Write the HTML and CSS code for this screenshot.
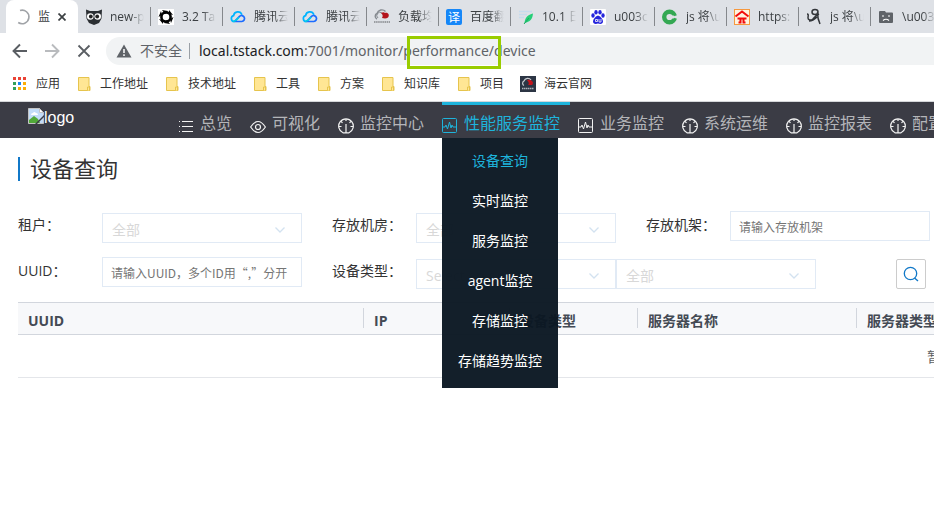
FILE: index.html
```html
<!DOCTYPE html>
<html lang="zh-CN">
<head>
<meta charset="utf-8">
<title>设备查询</title>
<link rel="stylesheet" href="styles.css">
</head>
<body>
<svg width="0" height="0" class="defs" aria-hidden="true">
  <symbol id="cloud" viewBox="0 0 16 16"><path d="M4.500 12.500h-.3a3 3 0 0 1-.6-5.900A4.300 4.300 0 0 1 11.900 5.700" fill="none" stroke="#00b4ff" stroke-width="1.700"/><path d="M4.500 12.500h7.300a3 3 0 1 0-2.300-5.200z" fill="none" stroke="#1c6cff" stroke-width="1.700" stroke-linejoin="round"/><path d="M3 12.300c2 .4 3.500-1 6-4" fill="none" stroke="#00cfe8" stroke-width="1.700"/></symbol>
  <symbol id="folder" viewBox="0 0 16 16"><path d="M2.500 1.500h10.500v9h1v4H2.500z" fill="#ffe694" stroke="#e6c44d"/><path d="M11.500 14.500v-3.500h2v3.500" fill="#ffe694" stroke="#e6c44d"/></symbol>
  <symbol id="gauge" viewBox="0 0 16 16"><path d="M5 14.800a7.300 7.300 0 1 1 6 0z" fill="none" stroke="currentColor" stroke-width="1.200"/><path d="M8 6v9M1 8.500h2.500M12.500 8.500H15M3 3.300l1.500 1.500M13 3.300l-1.500 1.500M8 1v2" stroke="currentColor" stroke-width="1.200" fill="none"/></symbol>
  <symbol id="pulse" viewBox="0 0 16 16"><rect x=".5" y=".5" width="14" height="14" rx="1" fill="none" stroke="currentColor"/><path d="M1 9h2l1-2 1.500 4L7.500 4l1.500 6 1-3 1 2h3" fill="none" stroke="currentColor"/></symbol>
  <symbol id="chevron" viewBox="0 0 12 12"><path d="M1.500 3.500 6 8l4.500-4.500" fill="none" stroke="currentColor" stroke-width="1.300"/></symbol>
</svg>

<header class="browser">
  <div class="tabs">
    <div class="tab tab-active">
      <svg class="ico" viewBox="0 0 16 16"><path d="M6 1.500a6.800 6.800 0 1 1-1.800 12" fill="none" stroke="#a0a3a7" stroke-width="1.600"/></svg>
      <span class="tab-text">监</span>
      <button class="tab-close" aria-label="关闭"><svg viewBox="0 0 8 8" width="8" height="8"><path d="M.5.500l7 7M7.500.500l-7 7" stroke="#3c4043" stroke-width="1.700"/></svg></button>
    </div>
    <div class="tab">
      <svg class="ico" viewBox="0 0 16 16"><path d="M0 0.500l4 1.500h8l4-1.500-.5 9L13 14l-5 2-5-2L.5 9.500z" fill="#2b2f33"/><circle cx="4.300" cy="7.500" r="3.300" fill="#fff"/><circle cx="11.700" cy="7.500" r="3.300" fill="#fff"/><circle cx="4.800" cy="7.500" r="1.900" fill="#222"/><circle cx="11.200" cy="7.500" r="1.900" fill="#222"/></svg>
      <span class="tab-text">new-p</span>
    </div>
    <div class="tab">
      <svg class="ico" viewBox="0 0 16 16"><path d="M0 0h16v16H0z" fill="#fff"/><circle cx="8" cy="8" r="4.600" fill="none" stroke="#000" stroke-width="2.600"/><path d="M4 1l6 1-3 3zM11 1l4 5-4-1zM15.500 8l-2.500 6-1-4zM12 15l-6-1 3-3zM5 15l-4-5 4 1zM.500 8L3 2l1 4z" fill="#000"/></svg>
      <span class="tab-text">3.2 Ta</span>
    </div>
    <div class="tab"><svg class="ico"><use href="#cloud"/></svg><span class="tab-text">腾讯云</span></div>
    <div class="tab"><svg class="ico"><use href="#cloud"/></svg><span class="tab-text">腾讯云</span></div>
    <div class="tab">
      <svg class="ico" viewBox="0 0 16 16"><path d="M3 10a3 3 0 0 1 0-5.500 5 5 0 0 1 8.500-2" fill="none" stroke="#858a90" stroke-width="1.400"/><path d="M4 9a3 3 0 0 1 4-5" fill="none" stroke="#858a90"/><path d="M7 4c2-1 3-1 4 0 3-1 5 2 3 4.500-2 1.500-4 1-6 .5 1-2 1-3-1-5z" fill="#b3131b"/><path d="M0 13h16" stroke="#9a9da1" stroke-width="2" stroke-dasharray="1.500 .6"/></svg>
      <span class="tab-text">负载均</span>
    </div>
    <div class="tab">
      <svg class="ico" viewBox="0 0 16 16"><rect width="16" height="16" rx="2" fill="#1687f8"/><text x="2" y="12.500" class="glyph">译</text></svg>
      <span class="tab-text">百度翻</span>
    </div>
    <div class="tab">
      <svg class="ico" viewBox="0 0 16 16"><path d="M1 2.500h13M1 5.500h8M1 8.500h5" stroke="#c5dced" stroke-width="1.500"/><path d="M15 4.500c-5 1-8 4-8.500 9.500C12 13 14.500 10 15 4.500z" fill="#25cf78"/><path d="M6 15l5-6" stroke="#1ca860"/></svg>
      <span class="tab-text">10.1 日</span>
    </div>
    <div class="tab">
      <svg class="ico" viewBox="0 0 16 16"><rect width="16" height="16" rx="1" fill="#fff"/><g fill="#2525dc"><ellipse cx="3" cy="6.500" rx="1.700" ry="2.200"/><ellipse cx="6" cy="3.300" rx="1.700" ry="2.200"/><ellipse cx="10" cy="3.300" rx="1.700" ry="2.200"/><ellipse cx="13" cy="6.500" rx="1.700" ry="2.200"/><path d="M8 6.500c3 1 5 4 5 6s-2 3-5 2c-3 1-5 0-5-2s2-5 5-6z"/></g><path d="M5.500 10.500h2v2h-2zM9 10v3h2v-3" fill="none" stroke="#fff" stroke-width=".8"/></svg>
      <span class="tab-text">u003c</span>
    </div>
    <div class="tab">
      <svg class="ico" viewBox="0 0 16 16"><circle cx="7.500" cy="8" r="5.300" fill="none" stroke="#34a853" stroke-width="4.400"/><path d="M9 6.500h7v3H9z" fill="#dee1e6"/><path d="M10 3.500l3.500 3M10 12.500l3.500-3" stroke="#34a853" stroke-width="2"/></svg>
      <span class="tab-text">js 将\u</span>
    </div>
    <div class="tab">
      <svg class="ico" viewBox="0 0 16 16"><rect x=".5" y=".5" width="15" height="15" fill="#fff4df" stroke="#f6983e"/><path d="M1.500 7.500L8 2.500l6.500 5M3.500 9.500h9M6.500 9.500v4H4.500M9.500 9.500v4h2" fill="none" stroke="#f20d0d" stroke-width="2"/></svg>
      <span class="tab-text">https:</span>
    </div>
    <div class="tab">
      <svg class="ico" viewBox="0 0 16 16"><path d="M1 5c2 0 1 2 1 4s3 3 5 1 2-3 6-5M9 .500c-4 0-4 5 0 5s4-5 0-5zM11.500 3c0 4 0 7 2.500 12M3 12c4 0 6-2 8-4" fill="none" stroke="#33363a" stroke-width="1.500"/></svg>
      <span class="tab-text">js 将\u</span>
    </div>
    <div class="tab">
      <svg class="ico" viewBox="0 0 16 16"><path d="M1 3q0-1 1-1h5l1 1.500h6q1 0 1 1V13q0 1-1 1H2q-1 0-1-1z" fill="#5f6368"/><path d="M4 7h2M10 7h2M5 11.500q3-2.500 6 0" fill="none" stroke="#fff" stroke-width="1.200"/></svg>
      <span class="tab-text">\u003</span>
    </div>
  </div>

  <div class="toolbar">
    <button class="tool" aria-label="后退"><svg viewBox="0 0 16 16" class="ico"><path d="M15 8H2M8 1.500L1.500 8 8 14.500" fill="none" stroke="#5a5e63" stroke-width="1.900"/></svg></button>
    <button class="tool" aria-label="前进"><svg viewBox="0 0 16 16" class="ico"><path d="M1 8h13M8 1.500L14.500 8 8 14.500" fill="none" stroke="#b9bbbe" stroke-width="1.900"/></svg></button>
    <button class="tool" aria-label="停止"><svg viewBox="0 0 16 16" class="ico"><path d="M2.500 2.500l11 11M13.500 2.500l-11 11" stroke="#5a5e63" stroke-width="1.800"/></svg></button>
    <div class="omnibox">
      <svg class="ico" viewBox="0 0 16 16"><path d="M8 1.500L15.500 14.500H.5z" fill="#5f6368"/><path d="M8 6v4M8 11.200v1.800" stroke="#fff" stroke-width="1.500"/></svg>
      <span class="unsafe">不安全</span>
      <span class="url"><b>local.tstack.com</b>:7001/monitor/<span class="marked">performance/</span>device</span>
    </div>
  </div>

  <nav class="bookmarks">
    <a href="#"><svg class="ico" viewBox="0 0 16 16"><g fill="#ea4335"><path d="M1 1h3v3H1zM6 1h3v3H6zM11 1h3v3h-3z"/></g><path d="M1 6h3v3H1zM1 11h3v3H1z" fill="#34a05a"/><path d="M6 6h3v3H6z" fill="#1a86f0"/><path d="M11 6h3v3h-3zM6 11h3v3H6zM11 11h3v3h-3z" fill="#fbad05"/></svg>应用</a>
    <a href="#"><svg class="ico"><use href="#folder"/></svg>工作地址</a>
    <a href="#"><svg class="ico"><use href="#folder"/></svg>技术地址</a>
    <a href="#"><svg class="ico"><use href="#folder"/></svg>工具</a>
    <a href="#"><svg class="ico"><use href="#folder"/></svg>方案</a>
    <a href="#"><svg class="ico"><use href="#folder"/></svg>知识库</a>
    <a href="#"><svg class="ico"><use href="#folder"/></svg>项目</a>
    <a href="#"><svg class="ico" viewBox="0 0 16 16"><path d="M0 0h16v16H0z" fill="#2c3544"/><path d="M4 9.500a2.500 2.500 0 0 1 0-4.500 4 4 0 0 1 7-1" fill="none" stroke="#c9ccd1" stroke-width="1.200"/><path d="M7 4q3-1 5 1 2 2 0 4H8q2-2-1-5z" fill="#c3141c"/><path d="M2 12.500h12" stroke="#aeb3ba" stroke-width="1.600" stroke-dasharray="1.500 .5"/></svg>海云官网</a>
  </nav>
</header>

<nav class="topnav">
  <div class="logo">
    <svg class="ico" viewBox="0 0 16 16"><path d="M.5.500h11l4 4v11H.5z" fill="#c3dcf8" stroke="#c4c4c4"/><path d="M3 7q0-2 2-2 1-2 3 0 2 0 2 2z" fill="#fff"/><path d="M1 15v-3l5-4 4 3 2 4z" fill="#51a938"/><path d="M16 7v2L9 16H7z" fill="#3b3c45"/><path d="M11.500.500v4h4z" fill="#fff" stroke="#c4c4c4"/></svg><span>logo</span>
  </div>
  <ul class="menu">
    <li><a href="#"><svg class="ico" viewBox="0 0 16 16"><path d="M4 3.500h11M4 8.500h11M4 13.500h11M1 3.500h1M1 8.500h1M1 13.500h1" stroke="currentColor"/></svg><span>总览</span></a></li>
    <li><a href="#"><svg class="ico" viewBox="0 0 16 16"><path d="M.6 9Q8-2 15.400 9 8 20 .6 9z" fill="none" stroke="currentColor" stroke-width="1.200"/><circle cx="8" cy="9" r="2.500" fill="none" stroke="currentColor" stroke-width="1.200"/></svg><span>可视化</span></a></li>
    <li><a href="#"><svg class="ico"><use href="#gauge"/></svg><span>监控中心</span></a></li>
    <li class="current"><a href="#"><svg class="ico"><use href="#pulse"/></svg><span>性能服务监控</span></a>
      <ul class="submenu">
        <li><a href="#" class="selected">设备查询</a></li>
        <li><a href="#">实时监控</a></li>
        <li><a href="#">服务监控</a></li>
        <li><a href="#">agent监控</a></li>
        <li><a href="#">存储监控</a></li>
        <li><a href="#">存储趋势监控</a></li>
      </ul>
    </li>
    <li><a href="#"><svg class="ico"><use href="#pulse"/></svg><span>业务监控</span></a></li>
    <li><a href="#"><svg class="ico"><use href="#gauge"/></svg><span>系统运维</span></a></li>
    <li><a href="#"><svg class="ico"><use href="#gauge"/></svg><span>监控报表</span></a></li>
    <li><a href="#"><svg class="ico"><use href="#gauge"/></svg><span>配置</span></a></li>
  </ul>
</nav>

<main>
  <h1>设备查询</h1>
  <form class="filters">
    <div class="field"><label for="tenant">租户：</label><div class="pick"><select id="tenant"><option>全部</option></select><svg><use href="#chevron"/></svg></div></div>
    <div class="field"><label for="room">存放机房：</label><div class="pick"><select id="room"><option>全部</option></select><svg><use href="#chevron"/></svg></div></div>
    <div class="field"><label for="rack">存放机架：</label><input id="rack" type="text" placeholder="请输入存放机架"></div>
    <div class="field"><label for="uuid">UUID：</label><input id="uuid" type="text" placeholder="请输入UUID，多个ID用“,”分开"></div>
    <div class="field wide"><label for="type">设备类型：</label><div class="pick"><select id="type"><option>Select an option</option></select><svg><use href="#chevron"/></svg></div><div class="pick"><select aria-label="子类型"><option>全部</option></select><svg><use href="#chevron"/></svg></div>
      <button type="button" class="search" aria-label="查询"><svg class="ico" viewBox="0 0 16 16"><circle cx="7.500" cy="7.500" r="6.200" fill="none" stroke="#1178c8" stroke-width="1.300"/><path d="M11.500 12l3.500 3" stroke="#1178c8" stroke-width="1.400"/></svg></button></div>
  </form>
  <div class="table-wrap">
    <table>
      <thead><tr><th class="c-uuid">UUID</th><th class="c-ip">IP</th><th class="c-type">设备类型</th><th class="c-name">服务器名称</th><th>服务器类型</th></tr></thead>
      <tbody><tr><td colspan="5">暂无数据</td></tr></tbody>
    </table>
  </div>
</main>
</body>
</html>
```
FILE: styles.css
```css
* { box-sizing: border-box; }
body {
  margin: 0;
  min-height: 100vh;
  background: #fff;
  color: #333;
  font: 14px/20px "Open Sans", "Noto Sans CJK SC", sans-serif;
}
a { color: inherit; text-decoration: none; }
ul { list-style: none; margin: 0; padding: 0; }
button { border: 0; padding: 0; background: none; }
.defs { position: absolute; }
.ico { display: block; flex: none; width: 16px; height: 16px; overflow: visible; }

/* Browser frame */
.browser { overflow-x: clip; }
.tabs { display: flex; height: 33px; background: #dee1e6; overflow: hidden; }
.tab {
  display: flex;
  align-items: center;
  flex: none;
  gap: 8px;
  width: 72px;
  padding-left: 8px;
  font-size: 12px;
  color: #3c4043;
}
.tab + .tab + .tab { background: linear-gradient(#85888c, #85888c) 0 7px / 1px 19px no-repeat; }
.tab-text {
  flex: 1;
  overflow: hidden;
  white-space: nowrap;
  margin-right: 6px;
  -webkit-mask-image: linear-gradient(90deg, #000 60%, transparent);
  mask-image: linear-gradient(90deg, #000 60%, transparent);
}
.tab-active {
  margin-left: 6px;
  background: #fff;
  border-radius: 8px 8px 0 0;
}
.tab-active .tab-text { flex: none; margin: 0; mask-image: none; -webkit-mask-image: none; }
.tab-close svg { display: block; }
.glyph { font-size: 12px; fill: #fff; }
.toolbar { display: flex; align-items: center; height: 36px; padding-left: 12px; gap: 16px; }
.tool { display: block; }
.omnibox {
  display: flex;
  align-items: center;
  flex: 1;
  height: 28px;
  margin-left: -2px;
  padding-left: 10px;
  gap: 8px;
  border-radius: 14px 0 0 14px;
  background: #f1f3f4;
  color: #5f6368;
}
.unsafe { padding-right: 7px; border-right: 1px solid #9aa0a6; line-height: 16px; }
.url { padding-left: 1px; white-space: nowrap; font-family: "Noto Sans", sans-serif; }
.url b { font-weight: 400; color: #202124; }
.marked { position: relative; }
.marked::after {
  content: "";
  position: absolute;
  inset: -5px -7px -9px 4px;
  border: 3px solid #99cc00;
}
.bookmarks {
  display: flex;
  align-items: center;
  gap: 16px;
  height: 33px;
  padding: 0 12px 2px;
  border-bottom: 1px solid #d5d7da;
  font-size: 12px;
  white-space: nowrap;
}
.bookmarks a { display: flex; align-items: center; gap: 8px; }

/* Application navigation */
.topnav { display: flex; height: 36px; overflow-x: clip; background: #3b3c45; }
.logo { display: flex; flex: none; width: 150px; margin-left: 28px; padding-top: 6px; color: #fff; font: 16px/20px "Liberation Sans", sans-serif; }
.menu { display: flex; gap: 8px; font-size: 16px; white-space: nowrap; color: #b4b5b9; }
.menu > li { flex: none; position: relative; padding-right: 10px; border-top: 3px solid transparent; }
.menu > li > a { display: flex; align-items: center; gap: 6px; height: 36px; }
.menu .ico { color: #f2f2f2; margin-top: 6px; }
.menu > .current { border-color: #1eb4dc; color: #1eb4dc; }
.menu .current .ico { color: #1eb4dc; }
.submenu {
  position: absolute;
  z-index: 5;
  top: 33px;
  left: 0;
  width: 116px;
  padding: 3px 0 7px;
  background: rgba(11, 24, 35, .97);
  color: #fff;
  font-size: 14px;
  line-height: 40px;
  text-align: center;
}
.submenu a { display: block; }
.submenu .selected { color: #1eb4dc; }

/* Device query */
main { padding: 19px 0 0 18px; overflow-x: clip; }
h1 { margin: 0 0 30px; padding: 0 0 2px 10px; border-left: 2px solid #1178c8; font-size: 22px; line-height: 22px; font-weight: 400; }
.filters { display: grid; grid-template-columns: repeat(3, 284px); gap: 16px 30px; margin-bottom: 13px; }
.field { display: flex; height: 30px; }
.field label { flex: none; width: 84px; line-height: 28px; }
.field.wide { grid-column: span 2; height: 32px; }
.field input, .pick select {
  width: 200px;
  height: 30px;
  margin: 0;
  padding: 0 8px;
  border: 1px solid #e1eaf5;
  border-radius: 0;
  background: #fff;
  color: #333;
  font: 12px/20px "Noto Sans CJK SC", sans-serif;
}
.field input::placeholder { color: #757575; opacity: 1; }
.pick { position: relative; margin-top: 2px; height: 30px; }
.pick select { appearance: none; font: 14px/20px "Open Sans", "Noto Sans CJK SC", sans-serif; color: #d8d8d8; padding: 4px 9px 0; display: block; }
.pick svg { position: absolute; right: 16px; top: 11px; width: 12px; height: 12px; color: #d3e2f0; pointer-events: none; }
.search { display: grid; place-items: center; width: 30px; height: 30px; margin: 2px 4px 0 auto; border: 1px solid #ccc; border-radius: 2px; }
.table-wrap { overflow: hidden; }
table { width: 1874px; table-layout: fixed; border-collapse: collapse; }
th {
  height: 32px;
  padding: 4px 10px 0;
  text-align: left;
  border-top: 1px solid #d2d6dd;
  border-bottom: 1px solid #d2d6dd;
  background: #f7f8fa;
  color: #444a54;
}
th + th { padding-left: 11px; background: linear-gradient(#d2d6dd, #d2d6dd) 0 5px / 1px 20px no-repeat #f7f8fa; }
.c-uuid { width: 345px; }
.c-ip { width: 146px; }
.c-type { width: 128px; }
.c-name { width: 219px; }
td { height: 43px; padding: 2px 0 0; text-align: center; border-bottom: 1px solid #e4e6ea; color: #606266; }
```
